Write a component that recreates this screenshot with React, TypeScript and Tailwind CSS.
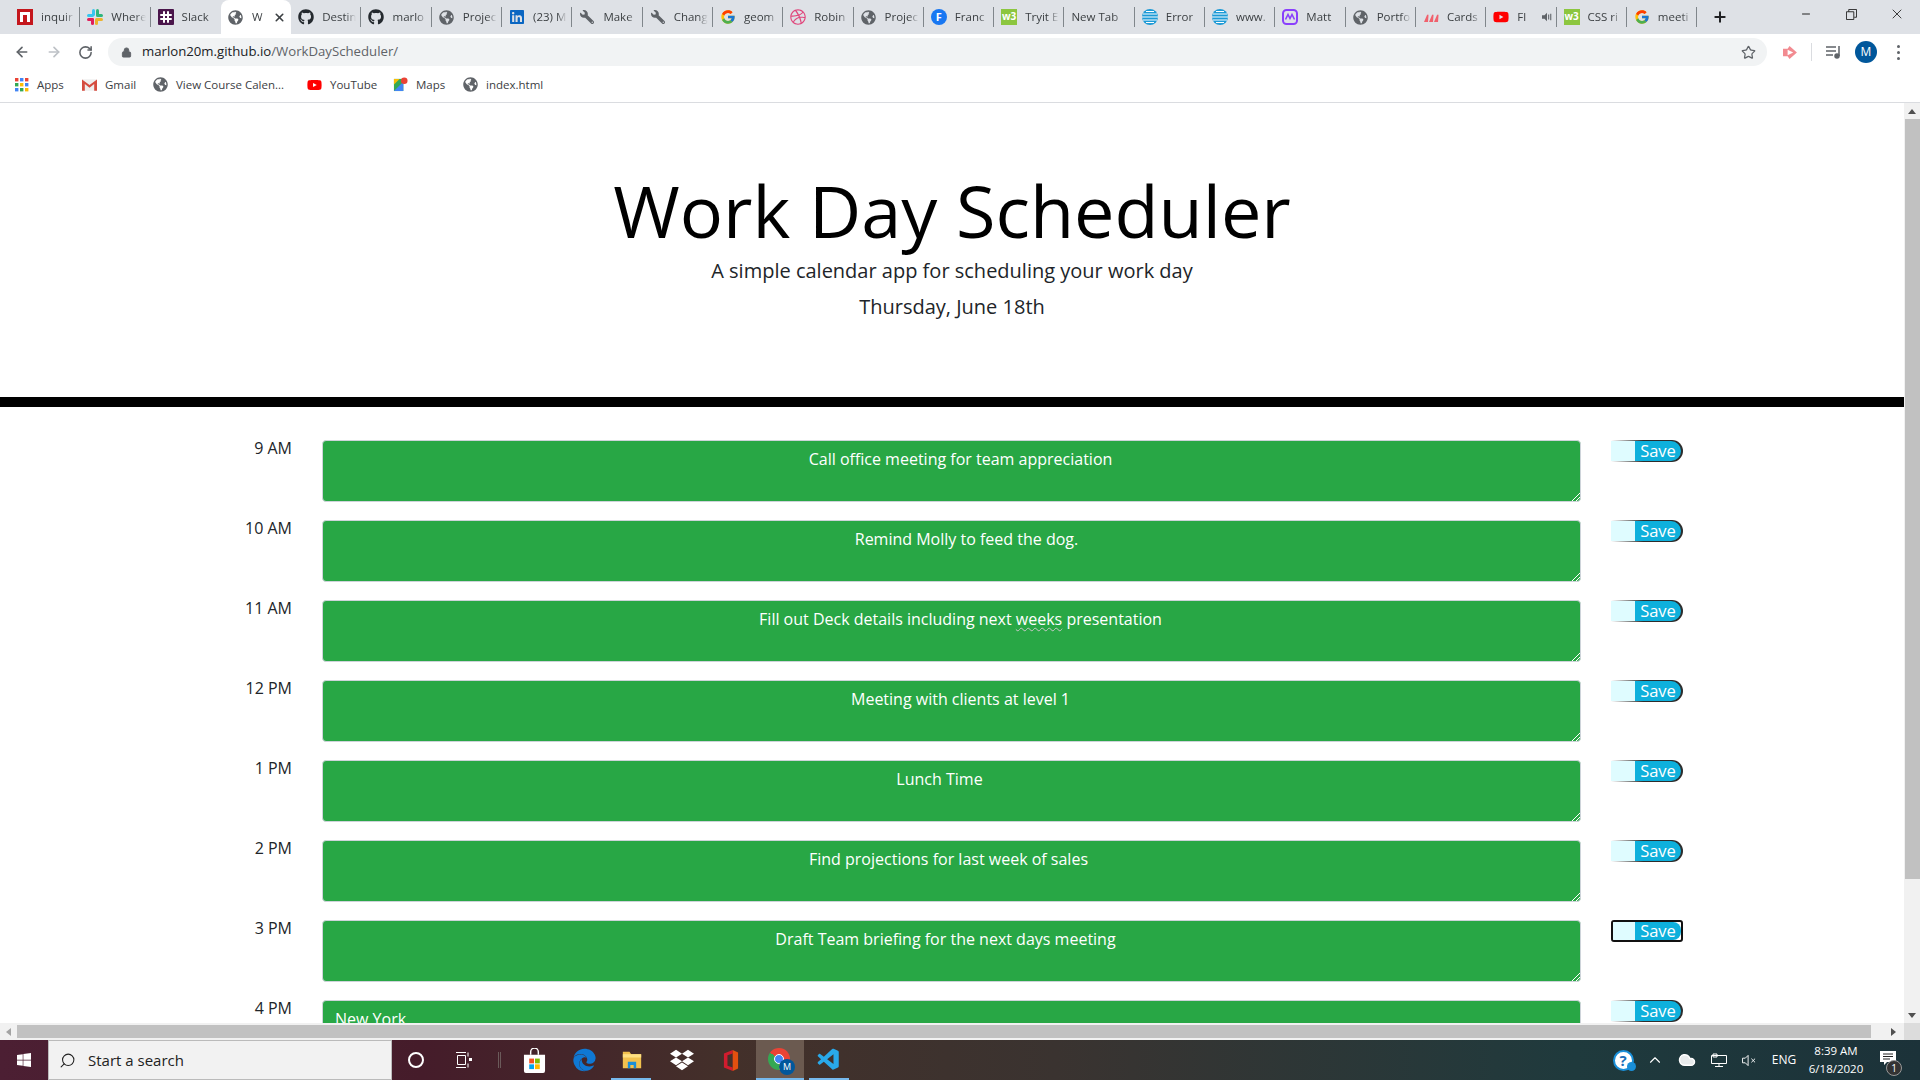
import { ReactNode } from 'react';
import { ArrowLeft, ArrowRight, RotateCw, Lock, Star, Plus, Minus, X, Search, ChevronUp, Cloud } from 'lucide-react';
import { FaGithub, FaLinkedin, FaYoutube, FaDribbble, FaDropbox, FaEdge, FaGlobeAmericas, FaWrench, FaWindows } from 'react-icons/fa';
import { FcGoogle } from 'react-icons/fc';
import { VscVscode } from 'react-icons/vsc';

const Globe = () => <FaGlobeAmericas className="w-[15px] h-[15px] text-[#5f6368]" />;
const Hub = () => <FaGithub className="w-[16px] h-[16px] text-[#24292e]" />;
const Wrench = () => <FaWrench className="w-[14px] h-[14px] text-[#5f6368] -scale-x-100" />;
const Google = () => <FcGoogle className="w-[16px] h-[16px]" />;

const W3 = () => (
  <div className="w-[16px] h-[16px] bg-[#8cc63f] text-white text-[10px] leading-[15px] font-bold text-center overflow-hidden">w3</div>
);

const Att = () => (
  <svg viewBox="0 0 16 16" className="w-[16px] h-[16px]">
    <circle cx="8" cy="8" r="8" fill="#1d9ad6" />
    <path d="M1 5h14M0 8h16M1 11h14M4 2.5h8M4 13.5h8" stroke="#fff" strokeWidth="1" />
  </svg>
);

const Inquir = () => (
  <svg viewBox="0 0 16 16" className="w-[16px] h-[16px]">
    <rect width="16" height="16" fill="#c4161c" />
    <path d="M3 13V3h10v10h-3V6H6v7z" fill="#fff" />
  </svg>
);

const SlackColor = () => (
  <svg viewBox="0 0 16 16" className="w-[16px] h-[16px]">
    <rect x="5" y="0" width="3" height="7" rx="1.5" fill="#36c5f0" />
    <rect x="0" y="5" width="7" height="3" rx="1.5" fill="#36c5f0" />
    <rect x="9" y="5" width="7" height="3" rx="1.5" fill="#2eb67d" />
    <rect x="9" y="0" width="3" height="7" rx="1.5" fill="#2eb67d" />
    <rect x="8" y="9" width="3" height="7" rx="1.5" fill="#ecb22e" />
    <rect x="9" y="9" width="7" height="3" rx="1.5" fill="#ecb22e" />
    <rect x="4" y="9" width="3" height="7" rx="1.5" fill="#e01e5a" />
    <rect x="0" y="9" width="7" height="3" rx="1.5" fill="#e01e5a" />
  </svg>
);

const SlackPurple = () => (
  <svg viewBox="0 0 16 16" className="w-[16px] h-[16px]">
    <rect width="16" height="16" rx="1" fill="#4a154b" />
    <path d="M6 3v10M10 3v10M3 6h10M3 10h10" stroke="#fff" strokeWidth="2" strokeLinecap="round" strokeDasharray="3 1" />
  </svg>
);

const Matt = () => (
  <svg viewBox="0 0 16 16" className="w-[16px] h-[16px]">
    <rect x="1" y="1" width="14" height="14" rx="3.5" fill="none" stroke="#8a3ffc" strokeWidth="2" />
    <path d="M3.5 10.5 6 5.5l2 4 2-4 2.5 5" fill="none" stroke="#8a3ffc" strokeWidth="1.6" />
  </svg>
);

const Cards = () => (
  <svg viewBox="0 0 16 16" className="w-[16px] h-[16px]">
    <path d="M1 13 4 6c.8-1 1.6-.6 1.500.5L5 13zM6 13l3-7c.8-1 1.600-.6 1.500.5L10 13zM11 13l3-7c.8-1 1.600-.6 1.500.5L15 13z" fill="#f0616d" />
  </svg>
);

const FCircle = () => (
  <div className="w-[16px] h-[16px] rounded-full bg-[#1877f2] text-white text-[11px] leading-[16px] font-bold text-center">F</div>
);

const Speaker = () => (
  <svg viewBox="0 0 12 12" className="w-[10px] h-[10px] shrink-0" fill="#5f6368">
    <path d="M0 4h3l3-3v10L3 8H0z" />
    <path d="M8 3v6M10.500 2v8" stroke="#5f6368" strokeWidth="1.3" />
  </svg>
);

const tabs: { icon: ReactNode; title: string }[] = [
  { icon: <Inquir />, title: 'inquir' },
  { icon: <SlackColor />, title: 'Where' },
  { icon: <SlackPurple />, title: 'Slack' },
  { icon: <Globe />, title: 'W' },
  { icon: <Hub />, title: 'Destin' },
  { icon: <Hub />, title: 'marlo' },
  { icon: <Globe />, title: 'Projec' },
  { icon: <FaLinkedin className="w-[16px] h-[16px] text-[#0a66c2]" />, title: '(23) M' },
  { icon: <Wrench />, title: 'Make' },
  { icon: <Wrench />, title: 'Chang' },
  { icon: <Google />, title: 'geom' },
  { icon: <FaDribbble className="w-[16px] h-[16px] text-[#e0457b]" />, title: 'Robin' },
  { icon: <Globe />, title: 'Projec' },
  { icon: <FCircle />, title: 'Franc' },
  { icon: <W3 />, title: 'Tryit E' },
  { icon: null, title: 'New Tab' },
  { icon: <Att />, title: 'Error' },
  { icon: <Att />, title: 'www.' },
  { icon: <Matt />, title: 'Matt' },
  { icon: <Globe />, title: 'Portfo' },
  { icon: <Cards />, title: 'Cards' },
  { icon: <FaYoutube className="w-[16px] h-[16px] text-[#f00]" />, title: 'Fl' },
  { icon: <W3 />, title: 'CSS ri' },
  { icon: <Google />, title: 'meeti' },
];

const AppsGrid = () => (
  <svg viewBox="0 0 14 14" className="w-[14px] h-[14px]">
    {[0, 5, 10].map((y, r) =>
      [0, 5, 10].map((x, c) => (
        <rect
          key={`${r}${c}`}
          x={x}
          y={y}
          width="3.4"
          height="3.4"
          fill={[['#ea4335', '#4285f4', '#ea4335'], ['#34a853', '#fbbc05', '#4285f4'], ['#4285f4', '#34a853', '#fbbc05']][r][c]}
        />
      )),
    )}
  </svg>
);

const GmailIcon = () => (
  <svg viewBox="0 0 16 12" className="w-[15px] h-[12px]">
    <rect width="16" height="12" fill="#eee" />
    <path d="M0 12V0l8 6 8-6v12h-3V5L8 9 3 5v7z" fill="#d54c3f" />
  </svg>
);

const MapsIcon = () => (
  <svg viewBox="0 0 16 16" className="w-[15px] h-[15px]">
    <path d="M1 2h10v13H1z" fill="#34a853" />
    <path d="M1 15 11 5v10z" fill="#4285f4" />
    <path d="M1 2h6L1 8z" fill="#fbbc05" />
    <circle cx="12" cy="4" r="3.5" fill="#ea4335" />
  </svg>
);

const bookmarks: { icon: ReactNode; label: string; w: string }[] = [
  { icon: <AppsGrid />, label: 'Apps', w: 'w-[68px]' },
  { icon: <GmailIcon />, label: 'Gmail', w: 'w-[71px]' },
  { icon: <Globe />, label: 'View Course Calen...', w: 'w-[154px]' },
  { icon: <FaYoutube className="w-[16px] h-[16px] text-[#f00]" />, label: 'YouTube', w: 'w-[86px]' },
  { icon: <MapsIcon />, label: 'Maps', w: 'w-[70px]' },
  { icon: <Globe />, label: 'index.html', w: 'w-[80px]' },
];

function BrowserChrome() {
  return (
    <div className="shrink-0 h-[103px] bg-white border-b border-[#dadce0] text-[#3c4043]">
      {/* tab strip */}
      <div className="h-[34px] bg-[#dee1e6] flex items-end pl-[10px]">
        {tabs.map((t, i) => {
          const active = i === 3;
          const noSep = i === 2 || i === 3;
          return (
            <div
              key={i}
              className={`w-[70.3px] h-[34px] shrink-0 flex items-center pl-[7px] pr-[5px] gap-[8px] relative ${active ? 'bg-white rounded-t-[8px]' : ''}`}
            >
              {t.icon && <span className="w-[16px] h-[16px] flex items-center justify-center shrink-0">{t.icon}</span>}
              <span className="flex-1 text-[11.5px] whitespace-nowrap overflow-hidden [mask-image:linear-gradient(90deg,#000_70%,transparent)]">
                {t.title}
              </span>
              {active && <X className="w-[13px] h-[13px] text-[#3c4043] shrink-0" strokeWidth={3} />}
              {i === 21 && <Speaker />}
              {!noSep && <span className="absolute right-0 top-[7px] h-[20px] w-px bg-[#80868b]" />}
            </div>
          );
        })}
        <Plus className="w-[16px] h-[16px] ml-[15px] mb-[9px] text-[#202124]" strokeWidth={3} />
        <div className="flex items-center ml-auto h-full pb-[6px]">
          <Minus className="w-[12px] h-[12px] mr-[34px] text-[#222]" />
          <svg viewBox="0 0 12 12" className="w-[11px] h-[11px] mr-[32px]" fill="none" stroke="#222">
            <path d="M.5 3h8v8.500h-8zM3 3V.5h8.500V9H9" />
          </svg>
          <X className="w-[16px] h-[16px] mr-[15px] text-[#222]" strokeWidth={1.3} />
        </div>
      </div>
      {/* toolbar */}
      <div className="h-[33px] pt-[4px] flex items-start">
        <div className="flex w-[108px] h-[28px] items-center pl-[14px] gap-[16px]">
          <ArrowLeft className="w-[16px] h-[16px] text-[#5f6368]" strokeWidth={2.5} />
          <ArrowRight className="w-[16px] h-[16px] text-[#bdc1c6]" strokeWidth={2.5} />
          <RotateCw className="w-[15px] h-[15px] text-[#5f6368]" strokeWidth={2.5} />
        </div>
        <div className="w-[1659px] h-[28px] bg-[#f1f3f4] rounded-full flex items-center pl-[13px] pr-[11px]">
          <Lock className="w-[11px] h-[11px] text-[#5f6368] fill-[#5f6368]" />
          <span className="ml-[10px] text-[13.2px] text-[#202124]">
            marlon20m.github.io<span className="text-[#5f6368]">/WorkDayScheduler/</span>
          </span>
          <Star className="w-[15px] h-[15px] text-[#5f6368] ml-auto" strokeWidth={2} />
        </div>
        <div className="flex items-center h-[28px] pl-[15px]">
          <svg viewBox="0 0 16 14" className="w-[15px] h-[13px]">
            <path d="M1 3h5l2-3 8 7-8 7-2-3H1z" fill="#f28b91" />
            <path d="M6 4l6 3-6 3z" fill="#fff" />
          </svg>
          <span className="w-px h-[18px] bg-[#dadce0] mx-[14px]" />
          <svg viewBox="0 0 16 14" className="w-[16px] h-[14px] mr-[13px]" fill="none" stroke="#5f6368" strokeWidth="1.5">
            <path d="M0 2h10M0 6h10M0 10h7M13 1v10" />
            <circle cx="11" cy="11" r="2" fill="#5f6368" />
          </svg>
          <div className="w-[22px] h-[22px] rounded-full bg-[#01579b] text-white text-[12px] leading-[22px] text-center mr-[20px]">M</div>
          <div className="flex flex-col gap-[3px]">
            <span className="w-[3px] h-[3px] rounded-full bg-[#5f6368]" />
            <span className="w-[3px] h-[3px] rounded-full bg-[#5f6368]" />
            <span className="w-[3px] h-[3px] rounded-full bg-[#5f6368]" />
          </div>
        </div>
      </div>
      {/* bookmarks */}
      <div className="h-[35px] flex items-center pl-[14px]">
        {bookmarks.map((b) => (
          <div key={b.label} className={`${b.w} shrink-0 flex items-center gap-[8px]`}>
            <span className="w-[15px] flex items-center justify-center shrink-0">{b.icon}</span>
            <span className="text-[11.5px] whitespace-nowrap text-[#3c4043]">{b.label}</span>
          </div>
        ))}
      </div>
    </div>
  );
}

const rows = [
  { time: '9 AM', text: <>Call office meeting for team appreciation</>, cls: 'pl-[18px]' },
  { time: '10 AM', text: <>Remind Molly to feed the dog.</>, cls: 'pl-[30px]' },
  { time: '11 AM', text: <>Fill out Deck details including next <span className="underline decoration-wavy decoration-1 decoration-[#c8c8c8] underline-offset-2">weeks</span> presentation</>, cls: 'pl-[18px]' },
  { time: '12 PM', text: <>Meeting with clients at level 1</>, cls: 'pl-[18px]' },
  { time: '1 PM', text: <>Lunch Time</>, cls: 'pr-[24px]' },
  { time: '2 PM', text: <>Find projections for last week of sales</>, cls: 'pr-[6px]' },
  { time: '3 PM', text: <>Draft Team briefing for the next days meeting</>, cls: 'pr-[12px]' },
  { time: '4 PM', text: <>New York</>, cls: '' },
];

function SaveButton({ focused }: { focused: boolean }) {
  return (
    <div
      className={
        focused
          ? 'w-[72px] h-[22px] shrink-0 mt-0 rounded-[3px] border-2 border-[#111] overflow-hidden flex'
          : 'w-[72px] h-[22px] shrink-0 rounded-r-[11px] bg-[linear-gradient(90deg,#fff_0%,#2d2d2d_45%)] py-[1px] pr-[2px] flex'
      }
    >
      <div className={`${focused ? 'w-[22px]' : 'w-[24px]'} bg-[#dffcff] shrink-0`} />
      <div className={`flex-1 bg-[#0eb0dc] text-white text-[16.5px] text-center ${focused ? 'leading-[18px] rounded-r-[8px]' : 'leading-[20px] rounded-r-[10px]'}`}>
        Save
      </div>
    </div>
  );
}

function Page() {
  return (
    <div className="flex-1 min-w-0 overflow-hidden bg-white font-['Open_Sans',sans-serif] text-[#212529]">
      <div className="h-[304px] pt-[64px] border-b-[10px] border-black text-center">
        <h1 className="text-[72px] leading-[86px] font-normal text-black">Work Day Scheduler</h1>
        <p className="text-[20px] leading-[30px] mt-[3px]">A simple calendar app for scheduling your work day</p>
        <p className="text-[20px] leading-[30px] mt-[6px]">Thursday, June 18th</p>
      </div>
      <div className="pt-[33px]">
        {rows.map((r, i) => (
          <div key={r.time} className="flex h-[62px] mb-[18px]">
            <div className="w-[292px] text-right text-[16px] leading-[16px]">{r.time}</div>
            <div
              className={`ml-[30px] w-[1259px] h-[62px] shrink-0 relative bg-[#28a745] border border-[#ced4da] rounded-[4px] text-white text-[16px] leading-[24px] pt-[6px] ${i === 7 ? 'pl-[12px] text-left' : `text-center ${r.cls}`}`}
            >
              {r.text}
              <svg viewBox="0 0 10 10" className="absolute right-0 bottom-0 w-[10px] h-[10px]" stroke="#fff" strokeWidth="1">
                <path d="M2 10 10 2M6 10l4-4" />
              </svg>
            </div>
            <div className="ml-[30px]">
              <SaveButton focused={i === 6} />
            </div>
          </div>
        ))}
      </div>
    </div>
  );
}

function Taskbar() {
  const cell = 'w-[48px] h-full flex items-center justify-center shrink-0 relative';
  const mark = 'absolute bottom-0 h-[2px] bg-[#76b9ed]';
  return (
    <div className="h-[40px] shrink-0 flex items-stretch bg-[linear-gradient(90deg,#4c1f33_0%,#451c2a_22%,#43302a_38%,#3a3330_55%,#1f3a3d_82%,#1c3239_100%)] text-white font-['Open_Sans',sans-serif]">
      <div className={cell}>
        <FaWindows className="w-[16px] h-[16px]" />
      </div>
      <div className="w-[344px] bg-[#f2f2f2] border border-[#bbb] flex items-center pl-[10px] gap-[12px] text-[#222] text-[15px]">
        <Search className="w-[17px] h-[17px] -scale-x-100" strokeWidth={1.5} />
        Start a search
      </div>
      <div className={cell}>
        <span className="w-[16px] h-[16px] rounded-full border-2 border-white" />
      </div>
      <div className={cell}>
        <svg viewBox="0 0 18 16" className="w-[18px] h-[16px]" fill="none" stroke="#fff">
          <path d="M1 .5h10M1 15.500h10M2.500 3.500h8v9h-8zM13 .5v4M13 11.500v4" />
          <rect x="14" y="6" width="3" height="3" fill="#fff" stroke="none" />
        </svg>
      </div>
      <div className="w-[22px] h-full flex items-center justify-center shrink-0">
        <span className="w-[3px] h-[16px] border-x border-[#6b5a5a]" />
      </div>
      <div className={cell}>
        <svg viewBox="0 0 24 26" className="w-[23px] h-[25px]">
          <path d="M1 7h22v17a2 2 0 0 1-2 2H3a2 2 0 0 1-2-2z" fill="#fff" />
          <path d="M8 7V4a4 4 0 0 1 8 0v3" fill="none" stroke="#fff" strokeWidth="1.5" />
          <rect x="6.500" y="11" width="5" height="5" fill="#f25022" />
          <rect x="12.500" y="11" width="5" height="5" fill="#7fba00" />
          <rect x="6.500" y="17" width="5" height="5" fill="#00a4ef" />
          <rect x="12.500" y="17" width="5" height="5" fill="#ffb900" />
        </svg>
      </div>
      <div className={`${cell} ml-[2px]`}>
        <FaEdge className="w-[23px] h-[24px] text-[#0f78d4]" />
      </div>
      <div className={cell}>
        <svg viewBox="0 0 24 24" className="w-[22px] h-[20px]">
          <path d="M1 2h8l2 3h12v17H1z" fill="#f2c14e" />
          <path d="M1 5h22v4H1z" fill="#ffe082" />
          <path d="M7 22v-8h10v8h-3v-4h-4v4z" fill="#1a8fd8" />
        </svg>
        <span className={`${mark} left-[3px] right-[5px]`} />
      </div>
      <div className={`${cell} ml-[2px]`}>
        <FaDropbox className="w-[24px] h-[24px]" />
      </div>
      <div className={`${cell} ml-[1px]`}>
        <svg viewBox="0 0 20 26" className="w-[18px] h-[23px]">
          <path d="M2 5 12 1v24L2 21z" fill="#d01c2e" />
          <path d="M6 7l6-2v16l-6-2z" fill="#43302a" />
          <path d="M12 1l6 3v18l-6 3z" fill="#e2500f" />
        </svg>
      </div>
      <div className={`${cell} ml-[1px] bg-[#6b5a50]`}>
        <div className="w-[22px] h-[22px] rounded-full relative -ml-[2px] -mt-[2px] bg-[conic-gradient(#ea4335_0_33%,#fbbc05_33%_50%,#34a853_50%_85%,#ea4335_85%_100%)]">
          <span className="absolute left-[6px] top-[6px] w-[10px] h-[10px] rounded-full bg-[#4285f4] border border-white" />
          <span className="absolute -right-[5px] -bottom-[5px] w-[16px] h-[16px] rounded-full bg-[#01579b] text-[9px] leading-[16px] text-center">M</span>
        </div>
        <span className={`${mark} left-0 right-0`} />
      </div>
      <div className={`${cell} ml-[1px]`}>
        <VscVscode className="w-[26px] h-[26px] text-[#29a9ea]" />
        <span className={`${mark} left-[4px] right-[4px]`} />
      </div>
      <div className="flex items-center ml-auto mr-[11px] text-[#fff]">
        <div className="w-[32px] flex justify-center relative">
          <div className="w-[21px] h-[21px] rounded-full bg-white border-2 border-[#1a8fd8] text-[#1a6fb8] text-[15px] leading-[17px] text-center font-bold">?</div>
          <span className="absolute right-[3px] bottom-0 w-[9px] h-[9px] rounded-full bg-[#1a8fd8]" />
        </div>
        <div className="w-[32px] flex justify-center">
          <ChevronUp className="w-[18px] h-[18px]" strokeWidth={1.5} />
        </div>
        <div className="w-[32px] flex justify-center">
          <Cloud className="w-[18px] h-[18px] fill-white/90" />
        </div>
        <div className="w-[32px] flex justify-center">
          <svg viewBox="0 0 16 14" className="w-[16px] h-[14px]" fill="none" stroke="#fff">
            <path d="M.5 2.500h15v8h-15zM8 10.500V13M4 13.500h8M2 1h4v3H2z" />
          </svg>
        </div>
        <div className="w-[28px] flex justify-center">
          <svg viewBox="0 0 16 14" className="w-[15px] h-[13px]" fill="none" stroke="#fff">
            <path d="M.5 4.500h3l3-3v11l-3-3h-3zM10 5l4 4M14 5l-4 4" />
          </svg>
        </div>
        <div className="w-[42px] text-center text-[12px]">ENG</div>
        <div className="w-[62px] text-center text-[11.5px] leading-[18px] whitespace-nowrap">
          <div>8:39 AM</div>
          <div>6/18/2020</div>
        </div>
        <div className="w-[42px] flex justify-center relative">
          <svg viewBox="0 0 16 16" className="w-[16px] h-[16px] -mt-[4px]">
            <path d="M0 1h16v11H7l-3 3v-3H0z" fill="#fff" />
            <path d="M3 4h10M3 6.500h10M3 9h7" stroke="#222" />
          </svg>
          <span className="absolute left-[19px] top-[6px] w-[16px] h-[16px] rounded-full bg-[#333] border border-[#999] text-[10px] leading-[14px] text-center">1</span>
        </div>
      </div>
    </div>
  );
}

export default function App() {
  return (
    <div className="w-[1920px] h-[1080px] flex flex-col overflow-hidden bg-white font-['Open_Sans',sans-serif]">
      <BrowserChrome />
      <div className="flex-1 min-h-0 flex">
        <Page />
        {/* vertical scrollbar */}
        <div className="w-[16px] shrink-0 bg-[#f1f1f1] flex flex-col items-center text-[#505050]">
          <div className="h-[16px] flex items-center justify-center">
            <span className="border-x-[4px] border-x-transparent border-b-[5px] border-b-[#505050]" />
          </div>
          <div className="w-[15px] h-[760px] bg-[#c1c1c1]" />
          <div className="mt-auto h-[16px] flex items-center justify-center">
            <span className="border-x-[4px] border-x-transparent border-t-[5px] border-t-[#505050]" />
          </div>
        </div>
      </div>
      {/* horizontal scrollbar */}
      <div className="h-[17px] shrink-0 bg-[#f1f1f1] flex items-center">
        <div className="w-[17px] flex justify-center">
          <span className="border-y-[4px] border-y-transparent border-r-[5px] border-r-[#a3a3a3]" />
        </div>
        <div className="w-[1854px] h-[13px] bg-[#c1c1c1]" />
        <div className="w-[33px] pl-[20px]">
          <span className="block w-0 border-y-[4px] border-y-transparent border-l-[5px] border-l-[#505050]" />
        </div>
        <div className="w-[16px] h-full bg-[#dcdcdc]" />
      </div>
      <Taskbar />
    </div>
  );
}
